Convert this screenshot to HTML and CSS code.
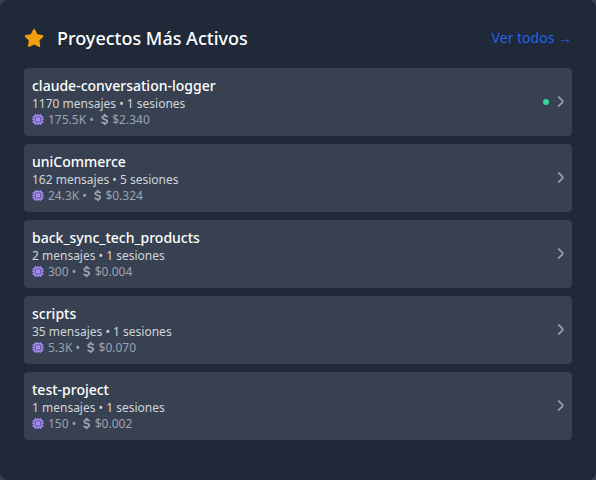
FILE: index.html
```html
<!DOCTYPE html>
<html lang="es">
<head>
<meta charset="utf-8">
<title>Proyectos Más Activos</title>
<link rel="stylesheet" href="styles.css">
</head>
<body>
<svg class="sprite" aria-hidden="true">
  <symbol id="chip" viewBox="0 0 512 512">
    <path d="M160 22V490M256 22V490M352 22V490M22 160H490M22 256H490M22 352H490" stroke="currentColor" stroke-width="44" stroke-linecap="round"/>
    <rect x="64" y="64" width="384" height="384" rx="64" fill="currentColor"/>
    <rect x="144" y="144" width="224" height="224" rx="16" fill="none" stroke="#374151" stroke-width="28"/>
  </symbol>
  <symbol id="dollar" viewBox="0 0 320 512">
    <path d="M160 32V96M160 416V480M263 128C226 112 190 96 150 98C92 101 54 128 51 170C48 226 105 238 160 254C222 272 274 288 269 342C265 388 222 414 164 414C124 414 86 396 52 382" fill="none" stroke="currentColor" stroke-width="76" stroke-linecap="round" stroke-linejoin="round"/>
  </symbol>
  <symbol id="chevron" viewBox="0 0 320 512">
    <path d="M310.600 233.400c12.500 12.500 12.500 32.800 0 45.300l-192 192c-12.500 12.500-32.800 12.500-45.300 0s-12.500-32.800 0-45.300L242.700 256 73.400 86.600c-12.500-12.500-12.500-32.800 0-45.300s32.800-12.500 45.300 0l192 192z" fill="currentColor" stroke="currentColor" stroke-width="14"/>
  </symbol>
</svg>
<main class="card">
  <header class="head">
    <h3 class="title">
      <svg class="star" viewBox="0 0 576 512"><path fill="currentColor" d="M316.900 18C311.600 7 300.400 0 288.100 0s-23.400 7-28.800 18L195 150.300 51.400 171.500c-12 1.800-22 10.200-25.700 21.700s-.7 24.200 7.900 32.700L137.800 329 113.200 474.700c-2 12 3 24.200 12.900 31.300s23 8 33.800 2.300l128.300-68.500 128.300 68.500c10.800 5.700 23.900 4.900 33.800-2.300s14.900-19.300 12.900-31.300L438.500 329 542.700 225.900c8.600-8.500 11.700-21.200 7.900-32.700s-13.700-19.900-25.700-21.700L381.200 150.300 316.900 18z"/></svg>
      <span>Proyectos Más Activos</span>
    </h3>
    <a class="all">Ver todos →</a>
  </header>
  <div class="list">
    <div class="item">
      <div class="info">
        <p class="name">claude-conversation-logger</p>
        <p class="meta">1170 mensajes • 1 sesiones</p>
        <p class="stats"><svg class="chip"><use href="#chip"/></svg><span>175.5K •</span><svg class="dollar"><use href="#dollar"/></svg><span>$2.340</span></p>
      </div>
      <i class="dot"></i>
      <svg class="chevron"><use href="#chevron"/></svg>
    </div>
    <div class="item">
      <div class="info">
        <p class="name">uniCommerce</p>
        <p class="meta">162 mensajes • 5 sesiones</p>
        <p class="stats"><svg class="chip"><use href="#chip"/></svg><span>24.3K •</span><svg class="dollar"><use href="#dollar"/></svg><span>$0.324</span></p>
      </div>
      <svg class="chevron"><use href="#chevron"/></svg>
    </div>
    <div class="item">
      <div class="info">
        <p class="name">back_sync_tech_products</p>
        <p class="meta">2 mensajes • 1 sesiones</p>
        <p class="stats"><svg class="chip"><use href="#chip"/></svg><span>300 •</span><svg class="dollar"><use href="#dollar"/></svg><span>$0.004</span></p>
      </div>
      <svg class="chevron"><use href="#chevron"/></svg>
    </div>
    <div class="item">
      <div class="info">
        <p class="name">scripts</p>
        <p class="meta">35 mensajes • 1 sesiones</p>
        <p class="stats"><svg class="chip"><use href="#chip"/></svg><span>5.3K •</span><svg class="dollar"><use href="#dollar"/></svg><span>$0.070</span></p>
      </div>
      <svg class="chevron"><use href="#chevron"/></svg>
    </div>
    <div class="item">
      <div class="info">
        <p class="name">test-project</p>
        <p class="meta">1 mensajes • 1 sesiones</p>
        <p class="stats"><svg class="chip"><use href="#chip"/></svg><span>150 •</span><svg class="dollar"><use href="#dollar"/></svg><span>$0.002</span></p>
      </div>
      <svg class="chevron"><use href="#chevron"/></svg>
    </div>
  </div>
</main>
</body>
</html>
```
FILE: styles.css
```css
* { box-sizing: border-box; margin: 0; padding: 0; }
html { background: #374151; }
body { height: 480px; font-family: "Noto Sans", sans-serif; overflow: hidden; }
.sprite { display: none; }
.card { height: 480px; padding: 24px; background: #1f2937; border-radius: 8px; }
.head { display: flex; justify-content: space-between; align-items: center; height: 28px; margin-bottom: 16px; }
.title { display: flex; align-items: center; font-size: 18px; line-height: 28px; font-weight: 500; color: #fff; }
.star { width: 20.25px; height: 18px; margin-right: 12.75px; color: #f59e0b; }
.all { font-size: 14px; line-height: 20px; color: #2563eb; }
.list { display: flex; flex-direction: column; gap: 8px; }
.item { display: flex; align-items: center; height: 68px; padding: 8px; background: #374151; border-radius: 4px; }
.info { flex: 1; }
.name { font-size: 14px; line-height: 20px; font-weight: 500; color: #fff; }
.meta { font-size: 12px; line-height: 16px; color: #d1d5db; }
.stats { display: flex; align-items: center; font-size: 12px; line-height: 16px; color: #9ca3af; }
.chip { width: 12px; height: 12px; margin-right: 4px; color: #a78bfa; transform: translateY(-0.5px); }
.dollar { width: 7.5px; height: 12px; margin: 0 4px 0 7px; transform: translateY(-0.5px); }
.dot { width: 6px; height: 6px; margin-right: 8px; border-radius: 50%; background: #34d399; }
.chevron { width: 7.5px; height: 12px; color: #9ca3af; transform: translate(-0.5px, -0.5px); }
```
